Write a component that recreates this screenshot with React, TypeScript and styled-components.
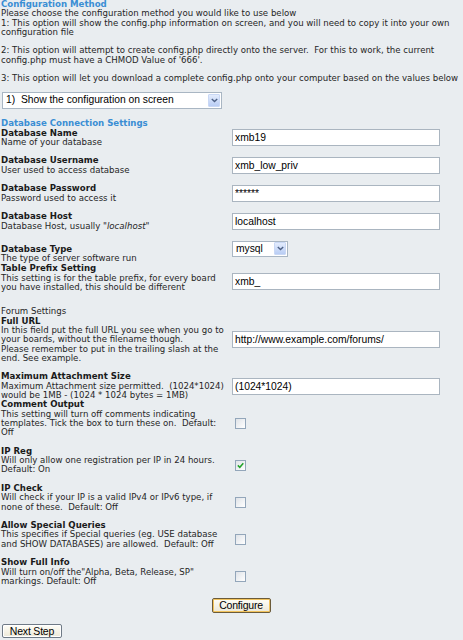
import React from "react";
import styled, { createGlobalStyle } from "styled-components";

const L = 9.3;

const GlobalStyle = createGlobalStyle`
  html, body { margin: 0; padding: 0; background: #e9edf0; }
  body {
    font-family: "DejaVu Sans", Verdana, sans-serif;
    font-size: 8.6px;
    line-height: ${L}px;
    color: #262626;
  }
`;

const Page = styled.div`
  width: 463px;
  box-sizing: border-box;
  padding-left: 1px;
  overflow: hidden;
  display: flex;
  flex-direction: column;
`;

const SectionTitle = styled.div<{ $top?: number }>`
  color: #3a8ed4;
  font-weight: bold;
  white-space: pre;
  margin-top: ${(p) => p.$top ?? 0}px;
`;

const PlainTitle = styled.div<{ $top?: number }>`
  white-space: pre;
  margin-top: ${(p) => p.$top ?? 0}px;
`;

const TextLine = styled.div`
  white-space: pre;
  min-height: ${L}px;
`;

const SelectBox = styled.div<{ $w: number; $h: number; $top?: number; $left?: number }>`
  display: flex;
  align-items: center;
  justify-content: space-between;
  width: ${(p) => p.$w}px;
  height: ${(p) => p.$h}px;
  box-sizing: border-box;
  margin-top: ${(p) => p.$top ?? 0}px;
  margin-left: ${(p) => p.$left ?? 0}px;
  border: 1px solid #a9b6c3;
  background: #fff;
  font-family: "Liberation Sans", Arial, sans-serif;
  font-size: 10.3px;
  line-height: 12px;
  color: #000;
  padding: 0 1px 0 3px;
`;

const SelectArrow = styled.span`
  display: flex;
  align-items: center;
  justify-content: center;
  width: 12px;
  height: 13px;
  box-sizing: border-box;
  border: 1px solid #c9d8f5;
  border-radius: 1px;
  background: linear-gradient(#e3ecfd, #b9cdf4);
`;

const Row = styled.div<{ $gap: number; $align?: string }>`
  display: grid;
  grid-template-columns: 231px 1fr;
  align-items: ${(p) => p.$align ?? "center"};
  margin-top: ${(p) => p.$gap}px;
`;

const Label = styled.div<{ $pad?: number }>`
  padding-top: ${(p) => p.$pad ?? 0}px;
`;

const LabelTitle = styled.div`
  font-weight: bold;
  color: #1a1a1a;
  white-space: pre;
`;

const Control = styled.div<{ $shiftTop?: number }>`
  display: flex;
  align-items: center;
  padding-top: ${(p) => p.$shiftTop ?? 0}px;
`;

const TextInput = styled.input`
  width: 208px;
  height: 17px;
  box-sizing: border-box;
  border: 1px solid #aab5c0;
  background: #fff;
  padding: 0 2px;
  margin: 0;
  font-family: "Liberation Sans", Arial, sans-serif;
  font-size: 10.3px;
  color: #000;
  outline: none;
`;

const Box = styled.span`
  display: flex;
  align-items: center;
  justify-content: center;
  width: 11px;
  height: 11px;
  margin-left: 3px;
  box-sizing: border-box;
  border: 1px solid #93a6ba;
  background: linear-gradient(135deg, #dfe3e8, #ffffff);
`;

const ButtonRow = styled.div<{ $top: number; $center?: boolean }>`
  display: flex;
  justify-content: ${(p) => (p.$center ? "center" : "flex-start")};
  padding-left: ${(p) => (p.$center ? 18 : 1)}px;
  margin-top: ${(p) => p.$top}px;
`;

const Button = styled.button<{ $primary?: boolean }>`
  height: ${(p) => (p.$primary ? 15 : 14)}px;
  width: ${(p) => (p.$primary ? 59 : 60)}px;
  padding: 0;
  margin: 0;
  box-sizing: border-box;
  font-family: "Liberation Sans", Arial, sans-serif;
  font-size: 10.5px;
  line-height: 12px;
  color: #000;
  border-radius: 2px;
  border: 1px solid ${(p) => (p.$primary ? "#6b5b3a" : "#6f7a86")};
  box-shadow: ${(p) => (p.$primary ? "inset 0 0 0 1px #f2c35c" : "inset 0 0 0 1px #fff")};
  background: linear-gradient(#fffef8, #ece8d8);
  letter-spacing: -0.2px;
`;

const ArrowIcon = () => (
  <svg width="7" height="5" viewBox="0 0 7 5">
    <path d="M0.8 1 L3.5 3.6 L6.2 1" fill="none" stroke="#4d6185" strokeWidth="1.4" />
  </svg>
);

const CheckIcon = () => (
  <svg width="7" height="7" viewBox="0 0 7 7">
    <path d="M0.8 3.4 L2.8 5.3 L6.3 1.2" fill="none" stroke="#22a22a" strokeWidth="1.5" />
  </svg>
);

type Field =
  | { kind: "input"; title: string; desc: React.ReactNode[]; value: string; gap: number; shift?: number }
  | { kind: "check"; title: string; desc: string[]; checked: boolean; gap: number };

const intro = [
  "Please choose the configuration method you would like to use below",
  "1: This option will show the config.php information on screen, and you will need to copy it into your own",
  "configuration file",
  "",
  "2: This option will attempt to create config.php directly onto the server.  For this to work, the current",
  "config.php must have a CHMOD Value of '666'.",
  "",
  "3: This option will let you download a complete config.php onto your computer based on the values below",
];

const dbFields: Field[] = [
  { kind: "input", title: "Database Name", desc: ["Name of your database"], value: "xmb19", gap: 0 },
  { kind: "input", title: "Database Username", desc: ["User used to access database"], value: "xmb_low_priv", gap: L },
  { kind: "input", title: "Database Password", desc: ["Password used to access it"], value: "******", gap: L },
  {
    kind: "input",
    title: "Database Host",
    desc: [
      <>
        Database Host, usually "<i>localhost</i>"
      </>,
    ],
    value: "localhost",
    gap: L,
  },
];

const prefixField: Field = {
  kind: "input",
  title: "Table Prefix Setting",
  desc: ["This setting is for the table prefix, for every board", "you have installed, this should be different"],
  value: "xmb_",
  gap: 1,
  shift: 6,
};

const forumFields: Field[] = [
  {
    kind: "input",
    title: "Full URL",
    desc: [
      "In this field put the full URL you see when you go to",
      "your boards, without the filename though.",
      "Please remember to put in the trailing slash at the",
      "end. See example.",
    ],
    value: "http://www.example.com/forums/",
    gap: 0,
  },
  {
    kind: "input",
    title: "Maximum Attachment Size",
    desc: ["Maximum Attachment size permitted.  (1024*1024)", "would be 1MB - (1024 * 1024 bytes = 1MB)"],
    value: "(1024*1024)",
    gap: L,
  },
  {
    kind: "check",
    title: "Comment Output",
    desc: ["This setting will turn off comments indicating", "templates. Tick the box to turn these on.  Default:", "Off"],
    checked: false,
    gap: 0,
  },
  {
    kind: "check",
    title: "IP Reg",
    desc: ["Will only allow one registration per IP in 24 hours.", "Default: On"],
    checked: true,
    gap: L,
  },
  {
    kind: "check",
    title: "IP Check",
    desc: ["Will check if your IP is a valid IPv4 or IPv6 type, if", "none of these.  Default: Off"],
    checked: false,
    gap: L,
  },
  {
    kind: "check",
    title: "Allow Special Queries",
    desc: ["This specifies if Special queries (eg. USE database", "and SHOW DATABASES) are allowed.  Default: Off"],
    checked: false,
    gap: L,
  },
  {
    kind: "check",
    title: "Show Full Info",
    desc: ['Will turn on/off the"Alpha, Beta, Release, SP"', "markings. Default: Off"],
    checked: false,
    gap: L,
  },
];

const FieldRow = ({ f }: { f: Field }) => (
  <Row $gap={f.gap}>
    <Label>
      <LabelTitle>{f.title}</LabelTitle>
      {f.desc.map((d, i) => (
        <TextLine key={i}>{d}</TextLine>
      ))}
    </Label>
    {f.kind === "input" ? (
      <Control $shiftTop={f.shift}>
        <TextInput defaultValue={f.value} />
      </Control>
    ) : (
      <Control $shiftTop={L}>
        <Box>{f.checked && <CheckIcon />}</Box>
      </Control>
    )}
  </Row>
);

export default function App() {
  return (
    <>
      <GlobalStyle />
      <Page>
        <SectionTitle>Configuration Method</SectionTitle>
        {intro.map((t, i) => (
          <TextLine key={i}>{t}</TextLine>
        ))}
        <SelectBox $w={220} $h={17} $top={8.3} $left={1}>
          <span>1)&nbsp; Show the configuration on screen</span>
          <SelectArrow>
            <ArrowIcon />
          </SelectArrow>
        </SelectBox>

        <SectionTitle $top={10.3}>Database Connection Settings</SectionTitle>
        {dbFields.map((f) => (
          <FieldRow key={f.title} f={f} />
        ))}

        <Row $gap={10} $align="start">
          <Label $pad={4}>
            <LabelTitle>Database Type</LabelTitle>
            <TextLine>The type of server software run</TextLine>
          </Label>
          <Control>
            <SelectBox $w={56} $h={16}>
              <span>mysql</span>
              <SelectArrow>
                <ArrowIcon />
              </SelectArrow>
            </SelectBox>
          </Control>
        </Row>

        <FieldRow f={prefixField} />

        <PlainTitle $top={15}>Forum Settings</PlainTitle>
        {forumFields.map((f) => (
          <FieldRow key={f.title} f={f} />
        ))}

        <ButtonRow $top={11.5} $center>
          <Button $primary>Configure</Button>
        </ButtonRow>
        <ButtonRow $top={11}>
          <Button>Next Step</Button>
        </ButtonRow>
      </Page>
    </>
  );
}
